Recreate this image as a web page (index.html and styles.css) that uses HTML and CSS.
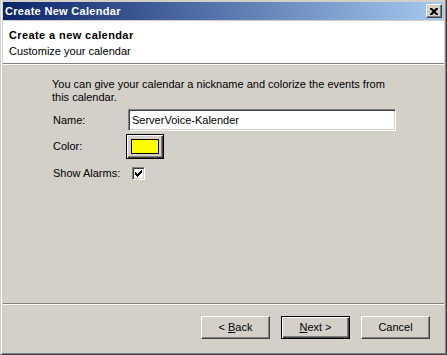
FILE: index.html
```html
<!DOCTYPE html>
<html lang="en">
<head>
    <meta charset="UTF-8">
    <title>Create New Calendar</title>
    <link rel="stylesheet" href="styles.css">
</head>
<body>
    <div class="window">
        <div class="titlebar">
            <span class="title">Create New Calendar</span>
            <button class="close" title="Close">
                <svg width="8" height="7" viewBox="0 0 8 7">
                    <path d="M0 0h2l2 2 2-2h2v1L5.5 3.5 8 6v1H6L4 5 2 7H0V6l2.5-2.5L0 1z" fill="#000"/>
                </svg>
            </button>
        </div>

        <div class="header">
            <h1>Create a new calendar</h1>
            <p>Customize your calendar</p>
        </div>

        <div class="content">
            <p class="intro">You can give your calendar a nickname and colorize the events from<br>this calendar.</p>

            <div class="form-row row-name">
                <label class="form-label" for="cal-name">Name:</label>
                <input id="cal-name" class="text-field" type="text" value="ServerVoice-Kalender">
            </div>

            <div class="form-row row-color">
                <span class="form-label">Color:</span>
                <button class="color-picker"><span class="swatch"></span></button>
            </div>

            <div class="form-row row-alarms">
                <span class="form-label">Show Alarms:</span>
                <span class="checkbox">
                    <svg width="7" height="7" viewBox="0 0 7 7">
                        <path d="M0 2h1v1h1v1h1V3h1V2h1V1h1V0h1v3H6v1H5v1H4v1H3v1H2V6H1V5H0z" fill="#000"/>
                    </svg>
                </span>
            </div>
        </div>

        <div class="footer">
            <button class="btn">&lt; <u>B</u>ack</button>
            <button class="btn btn-default"><u>N</u>ext &gt;</button>
            <button class="btn">Cancel</button>
        </div>
    </div>
</body>
</html>
```

FILE: styles.css
```css
* {
    box-sizing: border-box;
}

body {
    margin: 0;
    font-family: 'Liberation Sans', Arial, sans-serif;
    font-size: 11px;
    line-height: 13px;
    color: #000;
    background-color: #d4d0c8;
}

.window {
    width: 447px;
    height: 355px;
    display: flex;
    flex-direction: column;
    padding: 2px 2px 1px 2px;
    background-color: #d4d0c8;
    border-left: 1px solid #d4d0c8;
    border-right: 1px solid #404040;
    border-bottom: 1px solid #404040;
    box-shadow: inset 1px 0 #fff, inset -1px -1px #808080;
}

.titlebar {
    height: 18px;
    display: flex;
    align-items: center;
    justify-content: space-between;
    padding: 0 2px 0 2px;
    background: linear-gradient(to right, #0a246a, #a6caf0);
}

.titlebar .title {
    color: #fff;
    font-weight: bold;
    letter-spacing: 0.3px;
}

.close {
    width: 16px;
    height: 14px;
    padding: 0;
    display: flex;
    align-items: center;
    justify-content: center;
    background-color: #d4d0c8;
    border: 1px solid;
    border-color: #fff #404040 #404040 #fff;
    box-shadow: inset -1px -1px #808080;
}

.header {
    height: 43px;
    margin-top: 1px;
    padding: 8px 6px 0;
    background-color: #fff;
    border-bottom: 1px solid #808080;
}

.header h1 {
    margin: 0;
    font-size: 11px;
    font-weight: bold;
    letter-spacing: 0.4px;
}

.header p {
    margin: 3px 0 0;
}

.content {
    flex: 1;
    padding: 13px 48px 0 49px;
    border-top: 1px solid #fff;
}

.intro {
    margin: 0;
}

.form-row {
    display: flex;
    align-items: center;
    padding-left: 1px;
}

.row-name {
    margin-top: 5px;
}

.row-color {
    margin-top: 3px;
}

.row-alarms {
    margin-top: 8px;
}

.form-label {
    width: 73px;
    flex-shrink: 0;
}

.text-field {
    flex: 1;
    height: 22px;
    margin-left: 2px;
    padding: 0 3px;
    font: inherit;
    background-color: #fff;
    border: 1px solid;
    border-color: #808080 #fff #fff #808080;
    box-shadow: inset 1px 1px #404040, inset -1px -1px #d4d0c8;
    outline: none;
}

.color-picker {
    width: 38px;
    height: 25px;
    padding: 0;
    display: flex;
    align-items: center;
    justify-content: center;
    background-color: #d4d0c8;
    border: 1px solid #000;
    box-shadow: inset 1px 1px #fff, inset -1px -1px #404040, inset -2px -2px #808080;
}

.swatch {
    width: 28px;
    height: 15px;
    background-color: #ffff00;
    border: 1px solid #000;
}

.checkbox {
    width: 13px;
    height: 13px;
    margin-left: 6px;
    display: flex;
    align-items: center;
    justify-content: center;
    background-color: #fff;
    border: 1px solid;
    border-color: #808080 #fff #fff #808080;
    box-shadow: inset 1px 1px #404040, inset -1px -1px #d4d0c8;
}

.footer {
    height: 50px;
    display: flex;
    justify-content: flex-end;
    align-items: flex-start;
    gap: 11px;
    padding: 12px 14px 0 0;
    border-top: 1px solid #808080;
    box-shadow: inset 0 1px #fff;
}

.btn {
    width: 69px;
    height: 23px;
    padding: 0;
    font: inherit;
    color: #000;
    background-color: #d4d0c8;
    border: 1px solid;
    border-color: #fff #404040 #404040 #fff;
    box-shadow: inset -1px -1px #808080;
}

.btn-default {
    border-color: #000;
    box-shadow: inset 1px 1px #fff, inset -1px -1px #404040, inset -2px -2px #808080;
}
```
